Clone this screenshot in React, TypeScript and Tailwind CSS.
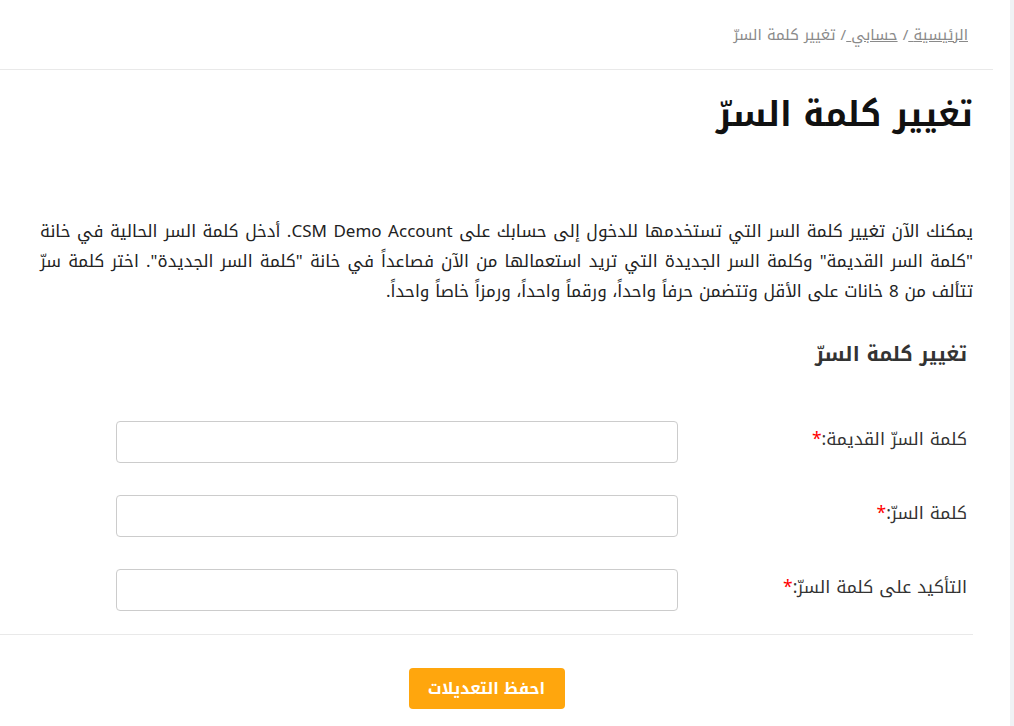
import React from "react";

const fields = [
  { id: "old", label: "كلمة السرّ القديمة:" },
  { id: "new", label: "كلمة السرّ:" },
  { id: "confirm", label: "التأكيد على كلمة السرّ:" },
];

export default function App() {
  return (
    <div className="flex min-h-screen bg-white font-['Noto_Kufi_Arabic','DejaVu_Sans',sans-serif]">
      <div dir="rtl" className="w-[1010px] shrink-0 bg-white">
        {/* Breadcrumb */}
        <div className="mr-[17px] h-[70px] flex items-center pr-[25px] border-b border-[#e9e9e9] text-[15px] leading-[20px] text-[#8a8a8a]">
          <span>
            <a href="#" className="underline">
              الرئيسية{" "}
            </a>
            /{" "}
            <a href="#" className="underline">
              حسابي{" "}
            </a>
            / تغيير كلمة السرّ
          </span>
        </div>

        <div className="pr-[37px]">
          <h1 className="mt-[24px] text-[33.75px] leading-[42px] font-bold text-[#111]">
            تغيير كلمة السرّ
          </h1>

          <p className="mt-[80px] pl-[40px] text-[17px] leading-[30px] text-[#222] text-justify">
            يمكنك الآن تغيير كلمة السر التي تستخدمها للدخول إلى حسابك على CSM
            Demo Account. أدخل كلمة السر الحالية في خانة "كلمة السر القديمة"
            وكلمة السر الجديدة التي تريد استعمالها من الآن فصاعداً في خانة
            "كلمة السر الجديدة". اختر كلمة سرّ تتألف من 8 خانات على الأقل وتتضمن
            حرفاً واحداً، ورقماً واحداً، ورمزاً خاصاً واحداً.
          </p>

          <h2 className="mt-[33px] pr-[6px] text-[20px] leading-[30px] font-bold text-[#333]">
            تغيير كلمة السرّ
          </h2>

          <div className="mt-[52px] flex flex-col gap-[32px] pr-[6px]">
            {fields.map((f) => (
              <div key={f.id} className="flex items-center">
                <label
                  htmlFor={f.id}
                  className="w-[289px] text-[17.5px] leading-[24px] text-[#333] -mt-[5px]"
                >
                  {f.label}
                  <span className="text-[#ff0000]">*</span>
                </label>
                <input
                  id={f.id}
                  type="password"
                  className="w-[562px] h-[42px] border border-[#cccccc] rounded-[4px] bg-white"
                />
              </div>
            ))}
          </div>
        </div>

        <div className="mt-[23px] mr-[37px] border-t border-[#e9e9e9]" />

        <div className="mr-[37px] pt-[33px] flex justify-center">
          <button className="w-[156px] h-[41px] bg-[#ffa60d] rounded-[4px] text-white text-[16px] leading-[20px] font-bold">
            احفظ التعديلات
          </button>
        </div>
      </div>
      <div className="flex-1 bg-[#f0f2f5]" />
    </div>
  );
}
